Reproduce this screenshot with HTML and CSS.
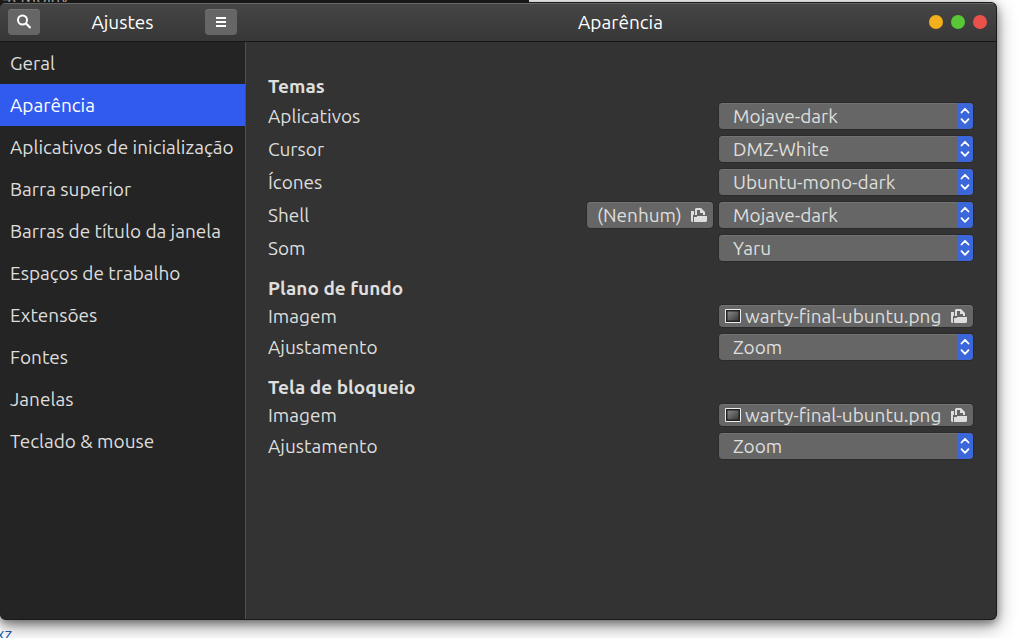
FILE: index.html
```html
<!DOCTYPE html>
<html lang="pt-BR">
<head>
<meta charset="utf-8">
<meta name="viewport" content="width=device-width, initial-scale=1">
<title>Ajustes</title>
<link rel="stylesheet" href="styles.css">
</head>
<body class="desktop">
<svg width="0" height="0" class="symbols" aria-hidden="true">
  <symbol id="arrows" viewBox="0 0 16 26"><path d="M4.500 9.500 8 5.800l3.500 3.700M4.500 16.200 8 19.900l3.500-3.700" fill="none" stroke="#fff" stroke-width="1.800" stroke-linecap="round" stroke-linejoin="round"/></symbol>
  <symbol id="open" viewBox="0 0 16 16"><path d="M0 4h3v4H2v7H1L0 14zM4 2l1-1h5l4 4v3h-2V6H9V3H6v5H4z" fill="#dededc"/><path d="M6 9h10v5l-1 1H3v-5h3z" fill="#dededc"/></symbol>
  <symbol id="picture" viewBox="0 0 16 14"><defs><linearGradient id="shade" x2="1" y2="1"><stop stop-color="#888"/><stop offset="1" stop-color="#3a3a3a"/></linearGradient></defs><path d="M.5.5h15v13H.5z" fill="#222" stroke="#eee"/><path d="M2 2h12v10H2z" fill="#222"/><path d="M2.500 2.500h11v9h-11z" fill="url(#shade)"/></symbol>
</svg>
<div class="behind behind-top" aria-hidden="true"><span class="peek-top">4cMojav</span></div>
<div class="behind behind-bottom" aria-hidden="true">xz</div>

<div class="window">
  <header class="titlebar">
    <div class="titlebar-side">
      <button class="tool" type="button" aria-label="Pesquisar">
        <svg width="16" height="16" viewBox="0 0 16 16"><circle cx="6.500" cy="6" r="4.500" fill="none" stroke="#fff" stroke-width="2"/><path d="m9.800 9.300 4.700 4.700" stroke="#fff" stroke-width="2.200"/></svg>
      </button>
      <h1 class="title">Ajustes</h1>
      <button class="tool" type="button" aria-label="Menu">
        <svg width="16" height="16" viewBox="0 0 16 16"><path d="M3 4h10M3 8h10M3 12h10" stroke="#fff" stroke-width="2"/></svg>
      </button>
    </div>
    <div class="titlebar-main">
      <h2 class="title">Aparência</h2>
      <div class="controls">
        <button class="dot dot-minimize" type="button" aria-label="Minimizar"></button>
        <button class="dot dot-maximize" type="button" aria-label="Maximizar"></button>
        <button class="dot dot-close" type="button" aria-label="Fechar"></button>
      </div>
    </div>
  </header>
  <div class="body">
    <nav class="sidebar">
      <a class="item" href="#geral">Geral</a>
      <a class="item item-active" href="#aparencia" aria-current="page">Aparência</a>
      <a class="item" href="#inicializacao">Aplicativos de inicialização</a>
      <a class="item" href="#barra">Barra superior</a>
      <a class="item" href="#titulo">Barras de título da janela</a>
      <a class="item" href="#espacos">Espaços de trabalho</a>
      <a class="item" href="#extensoes">Extensões</a>
      <a class="item" href="#fontes">Fontes</a>
      <a class="item" href="#janelas">Janelas</a>
      <a class="item" href="#teclado">Teclado &amp; mouse</a>
    </nav>
    <main class="content">
      <section class="group">
        <h3 class="heading">Temas</h3>
        <div class="row"><label class="label" for="apps">Aplicativos</label><span class="combo"><select class="select" id="apps"><option>Mojave-dark</option></select><svg class="cap"><use href="#arrows"/></svg></span></div>
        <div class="row"><label class="label" for="cursor">Cursor</label><span class="combo"><select class="select" id="cursor"><option>DMZ-White</option></select><svg class="cap"><use href="#arrows"/></svg></span></div>
        <div class="row"><label class="label" for="icons">Ícones</label><span class="combo"><select class="select" id="icons"><option>Ubuntu-mono-dark</option></select><svg class="cap"><use href="#arrows"/></svg></span></div>
        <div class="row"><label class="label" for="shell">Shell</label><button class="file file-none" type="button"><span class="file-name">(Nenhum)</span><svg class="open"><use href="#open"/></svg></button><span class="combo"><select class="select" id="shell"><option>Mojave-dark</option></select><svg class="cap"><use href="#arrows"/></svg></span></div>
        <div class="row"><label class="label" for="sound">Som</label><span class="combo"><select class="select" id="sound"><option>Yaru</option></select><svg class="cap"><use href="#arrows"/></svg></span></div>
      </section>
      <section class="group">
        <h3 class="heading">Plano de fundo</h3>
        <div class="row"><label class="label" for="bg">Imagem</label><button class="file file-image" id="bg" type="button"><svg class="picture"><use href="#picture"/></svg><span class="file-name">warty-final-ubuntu.png</span><svg class="open"><use href="#open"/></svg></button></div>
        <div class="row"><label class="label" for="bgfit">Ajustamento</label><span class="combo"><select class="select" id="bgfit"><option>Zoom</option></select><svg class="cap"><use href="#arrows"/></svg></span></div>
      </section>
      <section class="group">
        <h3 class="heading">Tela de bloqueio</h3>
        <div class="row"><label class="label" for="lock">Imagem</label><button class="file file-image" id="lock" type="button"><svg class="picture"><use href="#picture"/></svg><span class="file-name">warty-final-ubuntu.png</span><svg class="open"><use href="#open"/></svg></button></div>
        <div class="row"><label class="label" for="lockfit">Ajustamento</label><span class="combo"><select class="select" id="lockfit"><option>Zoom</option></select><svg class="cap"><use href="#arrows"/></svg></span></div>
      </section>
    </main>
  </div>
</div>
</body>
</html>
```
FILE: styles.css
```css
* { box-sizing: border-box; }

.desktop {
  margin: 0;
  min-height: 100vh;
  padding: 2px 27px 18px 0;
  display: flex;
  flex-direction: column;
  background: #fff;
  color: #dededc;
  font: 19px/22px Ubuntu, "Noto Sans", sans-serif;
  position: relative;
  overflow: hidden;
}
.symbols { position: absolute; }

/* Slivers of the windows underneath */
.behind { position: absolute; left: 0; overflow: hidden; }
.behind-top { top: 0; width: 529px; height: 8px; padding-left: 2px; background: #1c1c1c; color: #bbb; }
.peek-top { display: block; margin-top: -12px; font-size: 18px; line-height: 18px; }
.behind-bottom { bottom: 0; height: 10px; color: #2a5db0; font-size: 17px; line-height: 12px; margin-left: -4px; }

.window {
  flex: 1;
  display: flex;
  flex-direction: column;
  position: relative;
  background: #333;
  border: solid #1a1a1a;
  border-width: 1px 1px 1px 0;
  border-radius: 6px;
  box-shadow: 0 3px 8px rgba(0, 0, 0, .4), 0 6px 20px rgba(0, 0, 0, .4);
  overflow: hidden;
}

.titlebar {
  display: flex;
  height: 39px;
  flex: none;
  background: linear-gradient(#464646, #373737);
  border-bottom: 1px solid #161616;
  box-shadow: inset 0 1px #666;
}
.titlebar-side {
  width: 245px;
  padding: 0 8px;
  display: flex;
  align-items: center;
  justify-content: space-between;
}
.titlebar-main {
  flex: 1;
  padding: 0 9px;
  display: grid;
  grid-template-columns: 1fr auto 1fr;
  align-items: center;
}
.title { margin: 0; font-size: 19px; font-weight: 400; color: #fff; }
.titlebar-main .title { grid-column: 2; }
.tool {
  width: 32px;
  height: 26px;
  padding: 0;
  display: grid;
  place-items: center;
  border: 0;
  border-radius: 4px;
  background: #666;
  box-shadow: inset 0 1px #737373;
}
.controls { display: flex; justify-content: flex-end; gap: 8px; }
.dot { width: 14px; height: 14px; padding: 0; border: 0; border-radius: 50%; }
.dot-minimize { background: #f3af1c; }
.dot-maximize { background: #58c837; }
.dot-close { background: #eb514b; }

.body { flex: 1; display: flex; }
.sidebar {
  width: 246px;
  flex: none;
  background: #242424;
  border-right: 1px solid #505050;
}
.item {
  display: block;
  padding: 10px;
  color: inherit;
  text-decoration: none;
  white-space: nowrap;
}
.item-active { background: #315bef; color: #fff; }

.content {
  flex: 1;
  min-width: 0;
  padding: 36px 23px 22px 22px;
  display: flex;
  flex-direction: column;
  gap: 19px;
}
.group { display: flex; flex-direction: column; gap: 7px; }
.heading { margin: 0; padding-bottom: 2px; font-size: 19px; line-height: 16px; font-weight: 700; }
.row { display: flex; align-items: center; gap: 6px; }
.label { flex: 1; }

.combo { width: 254px; height: 26px; position: relative; border-radius: 4px; box-shadow: 0 0 0 1px #2b2b2b; }
.select {
  appearance: none;
  display: block;
  width: 100%;
  height: 26px;
  padding: 0 20px 0 14px;
  border: 0;
  border-radius: 4px;
  background: #666;
  box-shadow: inset 0 1px #737373;
  color: inherit;
  font: inherit;
}
.cap {
  position: absolute;
  top: 0;
  right: 0;
  width: 16px;
  height: 26px;
  background: #3c67db;
  border-radius: 0 4px 4px 0;
  pointer-events: none;
}
.file {
  display: flex;
  align-items: center;
  border: 0;
  border-radius: 4px;
  background: #666;
  box-shadow: inset 0 1px #737373, 0 0 0 1px #2b2b2b;
  color: inherit;
  font: inherit;
}
.file-none { width: 126px; height: 26px; padding: 0 6px 0 10px; }
.file-image { width: 254px; height: 22px; padding: 0 6px; gap: 4px; }
.file-name { flex: 1; text-align: left; white-space: nowrap; }
.open { width: 16px; height: 16px; flex: none; }
.picture { width: 16px; height: 14px; flex: none; }
```
